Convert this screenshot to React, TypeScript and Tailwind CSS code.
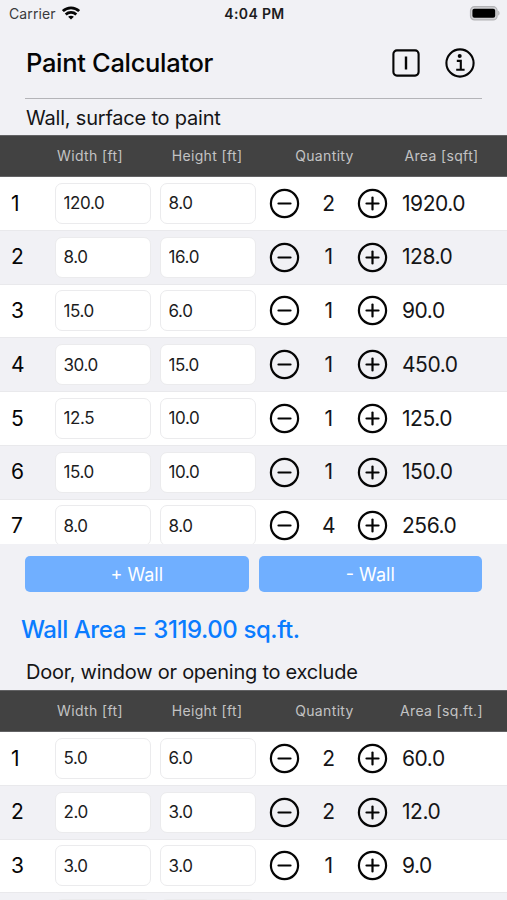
import { useState } from "react";

type Item = { width: string; height: string; quantity: number; area: string };

const walls: Item[] = [
  { width: "120.0", height: "8.0", quantity: 2, area: "1920.0" },
  { width: "8.0", height: "16.0", quantity: 1, area: "128.0" },
  { width: "15.0", height: "6.0", quantity: 1, area: "90.0" },
  { width: "30.0", height: "15.0", quantity: 1, area: "450.0" },
  { width: "12.5", height: "10.0", quantity: 1, area: "125.0" },
  { width: "15.0", height: "10.0", quantity: 1, area: "150.0" },
  { width: "8.0", height: "8.0", quantity: 4, area: "256.0" },
];

const openings: Item[] = [
  { width: "5.0", height: "6.0", quantity: 2, area: "60.0" },
  { width: "2.0", height: "3.0", quantity: 2, area: "12.0" },
  { width: "3.0", height: "3.0", quantity: 1, area: "9.0" },
];

const StatusBar = () => (
  <div className="grid h-[27px] shrink-0 grid-cols-3 items-center pl-[9px] pr-[7px] text-[#1c1c1e]">
    <div className="flex items-center gap-[6px]">
      <span className="text-[14px] tracking-[0.1px] text-[#3a3a3c]">Carrier</span>
      <svg className="-mt-[2px]" width="18" height="14" viewBox="0 0 18 14" fill="none" stroke="#050505" strokeWidth="2.7">
        <path d="M0.9 5.1C5.4 0.8 12.6 0.8 17.1 5.1" />
        <path d="M3.7 8.4C6.7 5.6 11.3 5.6 14.3 8.4" />
        <path d="M9 13.6L6.1 10.7C7.7 9.3 10.3 9.3 11.9 10.7Z" fill="#050505" stroke="none" />
      </svg>
    </div>
    <span className="text-center text-[14px] font-semibold tracking-[0.35px]">4:04 PM</span>
    <svg className="justify-self-end" width="31" height="15" viewBox="0 0 31 15">
      <rect x="1.5" y="0.7" width="26.6" height="13.2" rx="4" fill="#d2d2d5" stroke="#b3b3b6" strokeWidth="1.2" />
      <rect x="3.4" y="2.8" width="22.8" height="9" rx="2" fill="#000" />
      <path d="M29.2 4.8C31 5.4 31 9 29.2 9.6Z" fill="#b3b3b6" />
    </svg>
  </div>
);

const RoundButton = ({ plus, onClick }: { plus?: boolean; onClick: () => void }) => (
  <button className="h-[31px] w-[31px]" onClick={onClick}>
    <svg width="31" height="31" viewBox="0 0 31 31" fill="none" stroke="#050505" strokeWidth="2.2" strokeLinecap="round">
      <circle cx="15.5" cy="15.5" r="13.6" />
      <path d="M9.5 15.5H21.5" />
      {plus && <path d="M15.5 9.5V21.5" />}
    </svg>
  </button>
);

const TableHeader = ({ areaLabel }: { areaLabel: string }) => (
  <div className="grid h-[42px] shrink-0 grid-cols-[32px_116px_118px_117px_117px] items-center border-y border-[#626264] bg-[#424242] pb-px text-center text-[14px] tracking-[0.35px] text-[#c3c3c4]">
    <span />
    <span>Width [ft]</span>
    <span>Height [ft]</span>
    <span>Quantity</span>
    <span>{areaLabel}</span>
  </div>
);

const Field = ({ value }: { value?: string }) => (
  <input
    className="h-[41px] w-[96px] rounded-[7px] border border-[#ebebed] bg-white pl-[8px] text-[17px] tracking-[-0.4px] text-[#1c1c1e] outline-none"
    defaultValue={value}
  />
);

const Row = ({ item, index }: { item: Item; index: number }) => {
  const [quantity, setQuantity] = useState(item.quantity);

  return (
    <div className="flex h-[53.75px] shrink-0 items-center border-b border-[#e9e9ec] bg-white text-[21px] tracking-[-0.45px] text-[#151517] even:bg-[#f1f1f5]">
      <span className="w-[54.5px] pl-[11px] text-[#050505]">{index + 1}</span>
      <Field value={item.width} />
      <div className="ml-[9px] flex">
        <Field value={item.height} />
      </div>
      <div className="ml-[13.5px] flex w-[119px] items-center justify-between">
        <RoundButton onClick={() => setQuantity(Math.max(0, quantity - 1))} />
        <span>{quantity}</span>
        <RoundButton plus onClick={() => setQuantity(quantity + 1)} />
      </div>
      <span className="ml-[14px]">{item.area}</span>
    </div>
  );
};

const App = () => {
  return (
    <div className="flex h-[900px] w-[507px] flex-col overflow-hidden bg-[#f1f1f5] font-['Inter',sans-serif] text-[#151517]">
      <StatusBar />

      {/* Title bar */}
      <div className="mx-[25px] flex h-[71.5px] shrink-0 items-center border-b border-[#b4b4b8] pt-px">
        <h1 className="flex-1 pt-px pl-px text-[25.5px] font-medium tracking-[-0.32px] text-[#050505]">Paint Calculator</h1>
        <svg className="mr-[25px]" width="28" height="28" viewBox="0 0 28 28" fill="none" stroke="#050505" strokeWidth="2.1">
          <rect x="1.4" y="1.4" width="25.2" height="25.2" rx="3.5" />
          <path d="M14 7.5V20.5" strokeWidth="2.4" />
        </svg>
        <svg className="mr-[7px]" width="30" height="30" viewBox="0 0 30 30" fill="none" stroke="#050505" strokeWidth="2.1">
          <circle cx="15" cy="15" r="13.6" />
          <circle cx="14.7" cy="8.1" r="2" fill="#050505" stroke="none" />
          <path d="M11.8 12.9H15.8V21.6M11.2 21.8H19.6" />
        </svg>
      </div>

      <h2 className="h-[36.5px] shrink-0 pl-[26px] text-[20px] leading-[39px] tracking-[-0.2px]">Wall, surface to paint</h2>
      <TableHeader areaLabel="Area [sqft]" />
      <div className="flex h-[367px] shrink-0 flex-col overflow-hidden">
        {walls.map((item, index) => (
          <Row key={index} item={item} index={index} />
        ))}
      </div>

      <div className="mx-[25px] mt-[12px] grid shrink-0 grid-cols-2 gap-[10px] text-[18px] text-white">
        <button className="h-[36px] rounded-[5px] bg-[#70afff]">+ Wall</button>
        <button className="h-[36px] rounded-[5px] bg-[#70afff]">- Wall</button>
      </div>

      <p className="mt-[20px] h-[35px] shrink-0 pl-[21px] text-[24px] leading-[36px] font-medium tracking-[-0.43px] text-[#0a7cff]">
        Wall Area = 3119.00 sq.ft.
      </p>
      <h2 className="mt-[8px] h-[35px] shrink-0 pl-[26px] text-[20px] leading-[35px] tracking-[-0.25px]">
        Door, window or opening to exclude
      </h2>

      <TableHeader areaLabel="Area [sq.ft.]" />
      <div className="flex min-h-0 flex-1 flex-col overflow-hidden">
        {openings.map((item, index) => (
          <Row key={index} item={item} index={index} />
        ))}
        {/* Blank row peeking in at the bottom */}
        <div className="flex shrink-0 gap-[9px] pt-[6px] pl-[54.5px]">
          <Field />
          <Field />
        </div>
      </div>
    </div>
  );
};

export default App;
